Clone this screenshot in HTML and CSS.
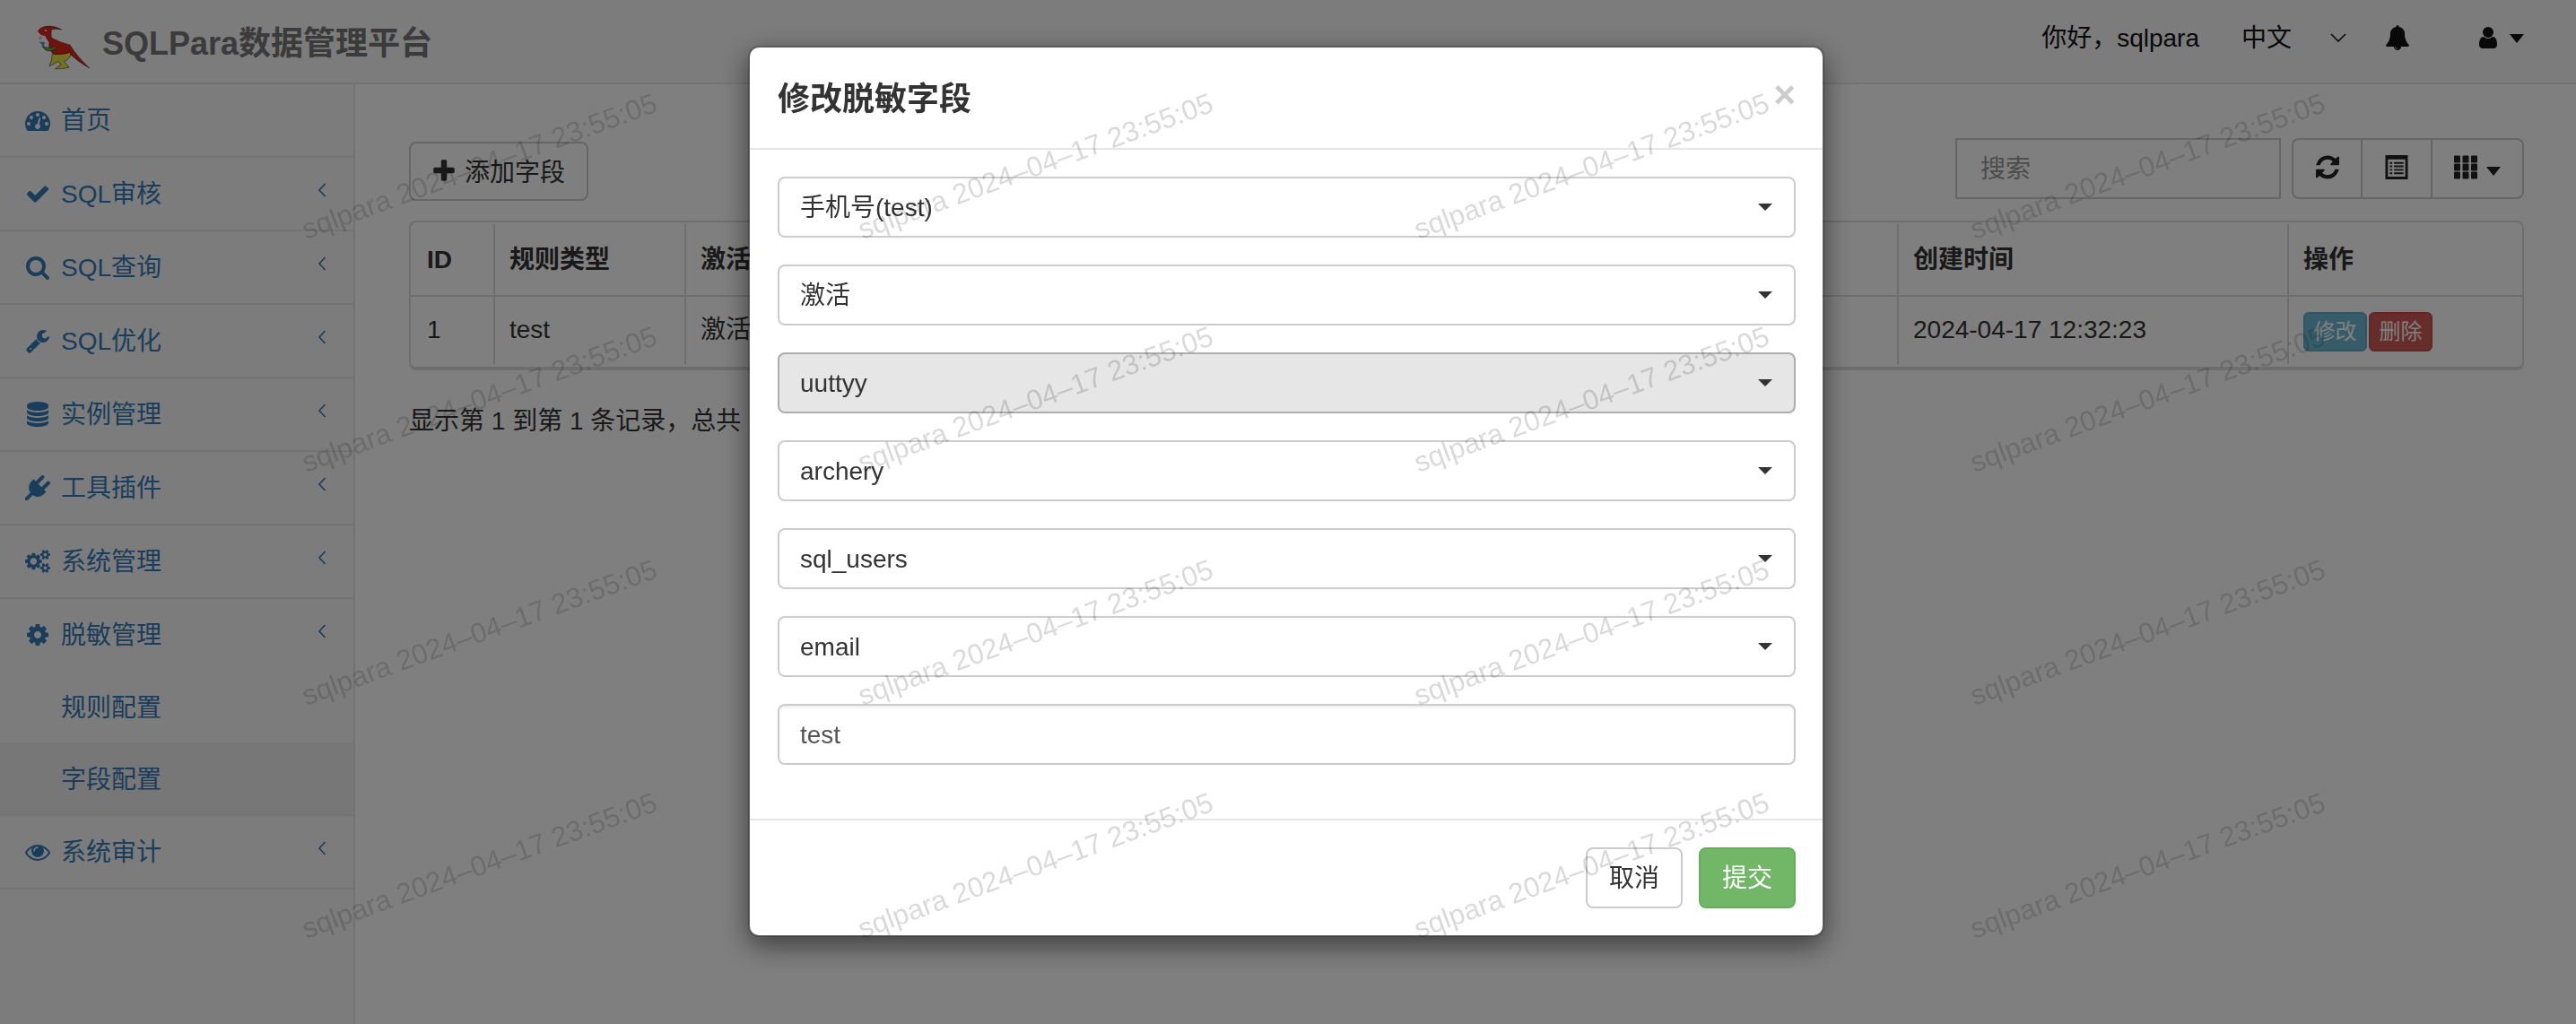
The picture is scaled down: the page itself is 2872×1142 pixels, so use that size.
FILE: index.html
```html
<!DOCTYPE html>
<html lang="zh-CN">
<head>
<meta charset="utf-8">
<title>SQLPara数据管理平台</title>
<link rel="stylesheet" href="styles.css">
</head>
<body>
<header class="navbar">
  <div class="brand">
    <svg class="logo" viewBox="120 80 190 160">
      <path fill="#e0241a" stroke="#111" stroke-width="1.5" d="M127 103Q135 88 165 86Q190 88 206 98Q185 93 172 98Q170 115 172 125Q195 140 235 150Q255 185 300 228Q260 205 235 180Q200 190 180 180Q160 165 165 140Q155 130 152 118Q135 118 127 103Z"/>
      <path fill="#e6e040" stroke="#111" stroke-width="1.5" d="M175 180Q205 185 236 175Q240 195 215 205L232 225Q210 232 185 230L205 215Q195 208 195 205L165 222Q175 200 175 180Z"/>
      <path fill="#60b030" stroke="#111" stroke-width="1.5" d="M140 152Q160 165 185 155L190 160Q165 178 150 165Z"/>
      <path fill="#5090e0" d="M130 138L150 140L147 155Z"/>
      <circle fill="#f0a8a8" cx="135" cy="126" r="5"/>
      <circle fill="#fff" cx="153" cy="101" r="3"/>
    </svg>
    <span class="brand-name">SQLPara数据管理平台</span>
  </div>
  <div class="nav-right">
    <span class="hello">你好，sqlpara</span>
    <span class="lang">中文</span>
    <svg class="lang-chevron" viewBox="0 0 18 10"><path d="M1 1l8 8 8-8" fill="none" stroke="currentColor" stroke-width="1.6"/></svg>
    <svg class="bell" viewBox="0 0 1792 1792"><path fill="currentColor" d="M912 1696q0-16-16-16-59 0-101.500-42.500t-42.500-101.500q0-16-16-16t-16 16q0 73 51.500 124.500t124.500 51.500q16 0 16-16zm816-288q0 52-38 90t-90 38h-448q0 106-75 181t-181 75-181-75-75-181h-448q-52 0-90-38t-38-90q50-42 91-88t85-119.500 74.500-158.500 50-206 19.500-260q0-152 117-282.500t307-158.500q-8-19-8-39 0-40 28-68t68-28 68 28 28 68q0 20-8 39 190 28 307 158.500t117 282.500q0 139 19.500 260t50 206 74.500 158.500 85 119.500 91 88z"/></svg>
    <svg class="user" viewBox="256 128 1280 1536"><path fill="currentColor" d="M1536 1399q0 109-62.500 187t-150.500 78h-854q-88 0-150.500-78t-62.500-187q0-85 8.500-160.500t31.500-152 58.500-131 94-89 134.500-34.500q131 128 313 128t313-128q76 0 134.500 34.500t94 89 58.500 131 31.500 152 8.500 160.500zm-256-887q0 159-112.500 271.500t-271.500 112.500-271.500-112.500-112.500-271.500 112.500-271.500 271.500-112.500 271.500 112.500 112.500 271.500z"/></svg>
    <span class="caret-big"></span>
  </div>
</header>

<div class="layout">
  <nav class="sidebar">
    <ul class="menu">
      <li class="menu-item"><a class="menu-link"><svg class="ico" viewBox="0 0 1792 1792"><path d="M384 1152q0-53-37.500-90.500t-90.500-37.500-90.500 37.500-37.500 90.500 37.500 90.500 90.500 37.500 90.500-37.500 37.500-90.500zm192-448q0-53-37.500-90.500t-90.500-37.500-90.500 37.500-37.500 90.500 37.500 90.500 90.500 37.500 90.500-37.500 37.500-90.500zm428 481l101-382q6-26-7.500-48.500t-38.500-29.500-48 6.500-30 39.500l-101 382q-60 5-107 43.500t-63 98.500q-20 77 20 146t117 89 146-20 89-117q16-60-6-117t-72-91zm660-33q0-53-37.500-90.500t-90.500-37.500-90.500 37.500-37.500 90.500 37.500 90.500 90.500 37.500 90.500-37.500 37.500-90.500zm-640-640q0-53-37.500-90.500t-90.500-37.500-90.500 37.500-37.500 90.500 37.500 90.500 90.500 37.500 90.500-37.500 37.500-90.500zm448 192q0-53-37.500-90.500t-90.500-37.500-90.500 37.500-37.500 90.500 37.500 90.500 90.500 37.500 90.500-37.500 37.500-90.500zm320 448q0 261-141 483-19 29-54 29h-1402q-35 0-54-29-141-221-141-483 0-182 71-348t191-286 286-191 348-71 348 71 286 191 191 286 71 348z"/></svg><span>首页</span></a></li>
      <li class="menu-item"><a class="menu-link"><svg class="ico" viewBox="0 0 1792 1792"><path d="M1671 566q0 40-28 68l-724 724-136 136q-28 28-68 28t-68-28l-136-136-362-362q-28-28-28-68t28-68l136-136q28-28 68-28t68 28l294 295 656-657q28-28 68-28t68 28l136 136q28 28 28 68z"/></svg><span>SQL审核</span><svg class="chev" viewBox="0 0 10 16"><path d="M8.500 1L2 8l6.500 7"/></svg></a></li>
      <li class="menu-item"><a class="menu-link"><svg class="ico" viewBox="0 0 1792 1792"><path d="M1216 832q0-185-131.500-316.500t-316.500-131.500-316.500 131.500-131.500 316.500 131.500 316.500 316.500 131.500 316.500-131.500 131.500-316.500zm512 832q0 52-38 90t-90 38q-54 0-90-38l-343-342q-179 124-399 124-143 0-273.500-55.500t-225-150-150-225-55.500-273.500 55.500-273.500 150-225 225-150 273.500-55.500 273.500 55.500 225 150 150 225 55.500 273.500q0 220-124 399l343 343q37 37 37 90z"/></svg><span>SQL查询</span><svg class="chev" viewBox="0 0 10 16"><path d="M8.500 1L2 8l6.500 7"/></svg></a></li>
      <li class="menu-item"><a class="menu-link"><svg class="ico" viewBox="0 0 1792 1792"><path d="M448 1472q0-26-19-45t-45-19-45 19-19 45 19 45 45 19 45-19 19-45zm644-420l-682 682q-37 37-90 37-52 0-91-37l-106-108q-38-36-38-90 0-53 38-91l681-681q39 98 114.500 173.500t173.500 114.500zm634-435q0 39-23 106-47 134-164.500 217.500t-258.500 83.500q-185 0-316.500-131.500t-131.500-316.500 131.500-316.500 316.500-131.500q58 0 121.500 16.500t107.500 46.500q16 11 16 28t-16 28l-293 169v224l193 107q5-3 79-48.500t135.500-81 70.500-35.500q15 0 23.500 10t8.500 25z"/></svg><span>SQL优化</span><svg class="chev" viewBox="0 0 10 16"><path d="M8.500 1L2 8l6.500 7"/></svg></a></li>
      <li class="menu-item"><a class="menu-link"><svg class="ico" viewBox="0 0 1792 1792"><path d="M896 768q237 0 443-43t325-127v170q0 69-103 128t-280 93.500-385 34.500-385-34.500-280-93.500-103-128v-170q119 84 325 127t443 43zm0 768q237 0 443-43t325-127v170q0 69-103 128t-280 93.500-385 34.500-385-34.500-280-93.500-103-128v-170q119 84 325 127t443 43zm0-384q237 0 443-43t325-127v170q0 69-103 128t-280 93.500-385 34.500-385-34.500-280-93.500-103-128v-170q119 84 325 127t443 43zm0-1152q208 0 385 34.500t280 93.500 103 128v128q0 69-103 128t-280 93.500-385 34.500-385-34.500-280-93.500-103-128v-128q0-69 103-128t280-93.500 385-34.500z"/></svg><span>实例管理</span><svg class="chev" viewBox="0 0 10 16"><path d="M8.500 1L2 8l6.500 7"/></svg></a></li>
      <li class="menu-item"><a class="menu-link"><svg class="ico" viewBox="0 0 1792 1792"><path d="M1755 453q37 38 37 90.500t-37 90.500l-401 400 150 150-160 160q-163 163-389.500 186.500t-411.500-100.500l-362 362h-181v-181l362-362q-124-185-100.500-411.500t186.500-389.500l160-160 150 150 400-401q38-37 91-37t90 37 37 90.500-37 90.500l-400 401 234 234 401-400q38-37 91-37t90 37z"/></svg><span>工具插件</span><svg class="chev" viewBox="0 0 10 16"><path d="M8.500 1L2 8l6.500 7"/></svg></a></li>
      <li class="menu-item"><a class="menu-link"><svg class="ico" viewBox="0 0 1920 1792"><path d="M896 896q0-106-75-181t-181-75-181 75-75 181 75 181 181 75 181-75 75-181zm768 512q0-52-38-90t-90-38-90 38-38 90q0 53 37.500 90.500t90.500 37.500 90.500-37.500 37.500-90.500zm0-1024q0-52-38-90t-90-38-90 38-38 90q0 53 37.500 90.500t90.500 37.500 90.500-37.500 37.500-90.500zm-384 421v185q0 10-7 19.500t-16 10.500l-155 24q-11 35-32 76 34 48 90 115 7 11 7 20 0 12-7 19-23 30-82.500 89.500t-78.500 59.500q-11 0-21-7l-115-90q-37 19-77 31-11 108-23 155-7 24-30 24h-186q-11 0-20-7.500t-10-17.500l-23-153q-34-10-75-31l-118 89q-7 7-20 7-11 0-21-8-144-133-144-160 0-9 7-19 10-14 41-53t47-61q-23-44-35-82l-152-24q-10-1-17-9.500t-7-19.500v-185q0-10 7-19.500t16-10.500l155-24q11-35 32-76-34-48-90-115-7-11-7-20 0-12 7-20 22-30 82-89t79-59q11 0 21 7l115 90q34-18 77-32 11-108 23-154 7-24 30-24h186q11 0 20 7.500t10 17.500l23 153q34 10 75 31l118-89q8-7 20-7 11 0 21 8 144 133 144 160 0 8-7 19-12 16-42 54t-45 60q23 48 34 82l152 23q10 2 17 10.500t7 19.500zm640 533v140q0 16-149 31-12 27-30 52 51 113 51 138 0 4-4 7-122 71-124 71-8 0-46-47t-52-68q-20 2-30 2t-30-2q-14 21-52 68t-46 47q-2 0-124-71-4-3-4-7 0-25 51-138-18-25-30-52-149-15-149-31v-140q0-16 149-31 13-29 30-52-51-113-51-138 0-4 4-7 4-2 35-20t59-34 30-16q8 0 46 46.500t52 67.500q20-2 30-2t30 2q51-71 92-112l6-2q4 0 124 70 4 3 4 7 0 25-51 138 17 23 30 52 149 15 149 31zm0-1024v140q0 16-149 31-12 27-30 52 51 113 51 138 0 4-4 7-122 71-124 71-8 0-46-47t-52-68q-20 2-30 2t-30-2q-14 21-52 68t-46 47q-2 0-124-71-4-3-4-7 0-25 51-138-18-25-30-52-149-15-149-31v-140q0-16 149-31 13-29 30-52-51-113-51-138 0-4 4-7 4-2 35-20t59-34 30-16q8 0 46 46.500t52 67.500q20-2 30-2t30 2q51-71 92-112l6-2q4 0 124 70 4 3 4 7 0 25-51 138 17 23 30 52 149 15 149 31z"/></svg><span>系统管理</span><svg class="chev" viewBox="0 0 10 16"><path d="M8.500 1L2 8l6.500 7"/></svg></a></li>
      <li class="menu-item">
        <a class="menu-link menu-link-open"><svg class="ico" viewBox="0 0 1792 1792"><path d="M1152 896q0-106-75-181t-181-75-181 75-75 181 75 181 181 75 181-75 75-181zm512-109v222q0 12-8 23t-20 13l-185 28q-19 54-39 91 35 50 107 138 10 12 10 25t-9 23q-27 37-99 108t-94 71q-12 0-26-9l-138-108q-44 23-91 38-16 136-29 186-7 28-36 28h-222q-14 0-24.500-8.500t-11.500-21.500l-28-184q-49-16-90-37l-141 107q-10 9-25 9-14 0-25-11-126-114-165-168-7-10-7-23 0-12 8-23 15-21 51-66.500t54-70.500q-27-50-41-99l-183-27q-13-2-21-12.500t-8-23.500v-222q0-12 8-23t19-13l186-28q14-46 39-92-40-57-107-138-10-12-10-24 0-10 9-23 26-36 98.500-107.500t94.500-71.500q13 0 26 10l138 107q44-23 91-38 16-136 29-186 7-28 36-28h222q14 0 24.500 8.500t11.500 21.500l28 184q49 16 90 37l142-107q9-9 24-9 13 0 25 10 129 119 165 170 7 8 7 22 0 12-8 23-15 21-51 66.500t-54 70.500q26 50 41 98l183 28q13 2 21 12.500t8 23.500z"/></svg><span>脱敏管理</span><svg class="chev" viewBox="0 0 10 16"><path d="M8.500 1L2 8l6.500 7"/></svg></a>
        <ul class="submenu">
          <li><a class="sub-link">规则配置</a></li>
          <li><a class="sub-link sub-link-active">字段配置</a></li>
        </ul>
      </li>
      <li class="menu-item"><a class="menu-link"><svg class="ico" viewBox="0 0 1792 1792"><path d="M1664 960q-152-236-381-353 61 104 61 225 0 185-131.500 316.500t-316.500 131.500-316.500-131.500-131.500-316.500q0-121 61-225-229 117-381 353 133 205 333.500 326.500t434.500 121.500 434.500-121.500 333.500-326.500zm-720-384q0-20-14-34t-34-14q-125 0-214.500 89.500t-89.500 214.500q0 20 14 34t34 14 34-14 14-34q0-86 61-147t147-61q20 0 34-14t14-34zm848 384q0 34-20 69-140 230-376.500 368.500t-499.500 138.500-499.500-139-376.500-368q-20-35-20-69t20-69q140-229 376.500-368t499.500-139 499.500 139 376.500 368q20 35 20 69z"/></svg><span>系统审计</span><svg class="chev" viewBox="0 0 10 16"><path d="M8.500 1L2 8l6.500 7"/></svg></a></li>
    </ul>
  </nav>

  <main class="content">
    <div class="toolbar">
      <button class="btn add-btn" type="button"><svg class="plus" viewBox="0 0 1792 1792"><path fill="currentColor" d="M1600 736v192q0 40-28 68t-68 28h-416v416q0 40-28 68t-68 28h-192q-40 0-68-28t-28-68v-416h-416q-40 0-68-28t-28-68v-192q0-40 28-68t68-28h416v-416q0-40 28-68t68-28h192q40 0 68 28t28 68v416h416q40 0 68 28t28 68z"/></svg><span>添加字段</span></button>
      <div class="tools">
        <input class="search" type="text" placeholder="搜索">
        <div class="btn-group">
          <button class="tool" type="button"><svg class="tool-ico" viewBox="128 128 1536 1536"><path fill="currentColor" d="M1639 1056q0 5-1 7-64 268-268 434.500t-478 166.500q-146 0-282.500-55t-243.500-157l-129 129q-19 19-45 19t-45-19-19-45v-448q0-26 19-45t45-19h448q26 0 45 19t19 45-19 45l-137 137q71 66 161 102t187 36q134 0 250-65t186-179q11-17 53-117 8-23 30-23h192q13 0 22.500 9.500t9.500 22.500zm25-800v448q0 26-19 45t-45 19h-448q-26 0-45-19t-19-45 19-45l138-138q-148-137-349-137-134 0-250 65t-186 179q-11 17-53 117-8 23-30 23h-199q-13 0-22.500-9.500t-9.500-22.500v-7q65-268 270-434.500t480-166.500q146 0 284 55.500t245 156.500l130-129q19-19 45-19t45 19 19 45z"/></svg></button>
          <button class="tool" type="button"><svg class="tool-ico" viewBox="0 0 26 28"><path fill="currentColor" fill-rule="evenodd" d="M0 0h26v28H0zM3 5v20h20V5z"/><path fill="currentColor" d="M5 8h3v2H5zM10 8h11v2H10zM5 12h3v2H5zM10 12h11v2H10zM5 16h3v2H5zM10 16h11v2H10zM5 20h3v2H5zM10 20h11v2H10z"/></svg></button>
          <button class="tool tool-wide" type="button"><svg class="tool-ico" viewBox="0 0 26 26"><path fill="currentColor" d="M0 1a1 1 0 0 1 1-1h5a1 1 0 0 1 1 1v6a1 1 0 0 1-1 1H1a1 1 0 0 1-1-1zM9.500 1a1 1 0 0 1 1-1h5a1 1 0 0 1 1 1v6a1 1 0 0 1-1 1h-5a1 1 0 0 1-1-1zM19 1a1 1 0 0 1 1-1h5a1 1 0 0 1 1 1v6a1 1 0 0 1-1 1h-5a1 1 0 0 1-1-1zM0 10a1 1 0 0 1 1-1h5a1 1 0 0 1 1 1v6a1 1 0 0 1-1 1H1a1 1 0 0 1-1-1zM9.500 10a1 1 0 0 1 1-1h5a1 1 0 0 1 1 1v6a1 1 0 0 1-1 1h-5a1 1 0 0 1-1-1zM19 10a1 1 0 0 1 1-1h5a1 1 0 0 1 1 1v6a1 1 0 0 1-1 1h-5a1 1 0 0 1-1-1zM0 19a1 1 0 0 1 1-1h5a1 1 0 0 1 1 1v6a1 1 0 0 1-1 1H1a1 1 0 0 1-1-1zM9.500 19a1 1 0 0 1 1-1h5a1 1 0 0 1 1 1v6a1 1 0 0 1-1 1h-5a1 1 0 0 1-1-1zM19 19a1 1 0 0 1 1-1h5a1 1 0 0 1 1 1v6a1 1 0 0 1-1 1h-5a1 1 0 0 1-1-1z"/></svg><span class="caret-big"></span></button>
        </div>
      </div>
    </div>

    <div class="table-box">
      <table class="data-table">
        <colgroup>
          <col class="col-id"><col class="col-type"><col class="col-state"><col class="col-time"><col class="col-act">
        </colgroup>
        <thead>
          <tr><th>ID</th><th>规则类型</th><th>激活</th><th>创建时间</th><th>操作</th></tr>
        </thead>
        <tbody>
          <tr>
            <td>1</td><td>test</td><td>激活</td><td>2024-04-17 12:32:23</td>
            <td><div class="row-actions"><button class="mini mini-info" type="button">修改</button><button class="mini mini-danger" type="button">删除</button></div></td>
          </tr>
        </tbody>
      </table>
    </div>
    <p class="pager">显示第 1 到第 1 条记录，总共 1 条记录</p>
  </main>
</div>

<div class="backdrop"></div>

<div class="modal">
  <div class="dialog">
    <div class="dialog-head">
      <h4 class="dialog-title">修改脱敏字段</h4>
      <button class="close" type="button">×</button>
    </div>
    <div class="dialog-body">
      <button class="select" type="button"><span>手机号(test)</span><i class="caret-sel"></i></button>
      <button class="select" type="button"><span>激活</span><i class="caret-sel"></i></button>
      <button class="select select-off" type="button"><span>uuttyy</span><i class="caret-sel"></i></button>
      <button class="select" type="button"><span>archery</span><i class="caret-sel"></i></button>
      <button class="select" type="button"><span>sql_users</span><i class="caret-sel"></i></button>
      <button class="select" type="button"><span>email</span><i class="caret-sel"></i></button>
      <input class="field" type="text" value="test">
    </div>
    <div class="dialog-foot">
      <button class="foot-btn foot-cancel" type="button">取消</button>
      <button class="foot-btn foot-ok" type="button">提交</button>
    </div>
  </div>
</div>

<div class="watermarks">
  <span class="wm">sqlpara 2024–04–17 23:55:05</span><span class="wm">sqlpara 2024–04–17 23:55:05</span><span class="wm">sqlpara 2024–04–17 23:55:05</span><span class="wm">sqlpara 2024–04–17 23:55:05</span>
  <span class="wm">sqlpara 2024–04–17 23:55:05</span><span class="wm">sqlpara 2024–04–17 23:55:05</span><span class="wm">sqlpara 2024–04–17 23:55:05</span><span class="wm">sqlpara 2024–04–17 23:55:05</span>
  <span class="wm">sqlpara 2024–04–17 23:55:05</span><span class="wm">sqlpara 2024–04–17 23:55:05</span><span class="wm">sqlpara 2024–04–17 23:55:05</span><span class="wm">sqlpara 2024–04–17 23:55:05</span>
  <span class="wm">sqlpara 2024–04–17 23:55:05</span><span class="wm">sqlpara 2024–04–17 23:55:05</span><span class="wm">sqlpara 2024–04–17 23:55:05</span><span class="wm">sqlpara 2024–04–17 23:55:05</span>
</div>
</body>
</html>
```

FILE: styles.css
```css
* { box-sizing: border-box; }
html, body { height: 100%; }
body {
  margin: 0;
  overflow: hidden;
  background: #fff;
  color: #333;
  font: 28px/40px "Liberation Sans", "Noto Sans CJK SC", sans-serif;
}
button, input { font: inherit; color: inherit; }

/* navbar */
.navbar {
  display: flex;
  justify-content: space-between;
  height: 94px;
  background: #f8f8f8;
  border-bottom: 2px solid #e7e7e7;
}
.brand { display: flex; align-items: center; padding-left: 40px; height: 92px; }
.logo { width: 63px; height: 53px; margin-right: 11px; margin-top: 14px; }
.brand-name { font-size: 36px; font-weight: 700; color: #777; margin-top: 6px; }
.nav-right { display: flex; align-items: center; height: 86px; color: #111; padding-right: 58px; }
.hello { margin-right: 47px; }
.lang { margin-right: 43px; }
.lang-chevron { width: 18px; height: 10px; margin-right: 43px; margin-top: -2px; }
.bell { width: 28px; height: 28px; margin-right: 76px; margin-top: -2px; }
.user { width: 22px; height: 24px; margin-right: 13px; margin-top: -2px; }
.caret-big {
  display: inline-block;
  width: 0; height: 0;
  border-top: 10px solid currentColor;
  border-left: 8px solid transparent;
  border-right: 8px solid transparent;
}

/* shell */
.layout { display: flex; height: calc(100% - 94px); }
.sidebar {
  width: 396px;
  flex: none;
  background: #f8f8f8;
  border-right: 2px solid #e7e7e7;
}
.menu, .submenu { list-style: none; margin: 0; padding: 0; }
.menu-item { border-bottom: 2px solid #e7e7e7; }
.menu-link {
  display: flex;
  align-items: center;
  height: 80px;
  padding-left: 28px;
  color: #337ab7;
}
.menu-link span { margin-top: 2px; }
.ico { width: 28px; height: 28px; flex: none; margin-right: 12px; fill: currentColor; overflow: visible; }
.chev {
  width: 10px; height: 16px;
  margin-left: auto;
  margin-right: 30px;
  margin-top: -8px;
  fill: none;
  stroke: currentColor;
  stroke-width: 1.6;
}
.sub-link { display: block; height: 80px; line-height: 83px; padding-left: 68px; color: #337ab7; }
.sub-link-active { background: #eee; }

/* content */
.content { flex: 1; min-width: 0; padding: 60px 58px 0 60px; }
.toolbar { display: flex; justify-content: space-between; align-items: flex-start; height: 92px; }
.btn {
  display: inline-flex;
  align-items: center;
  height: 66px;
  margin-top: 4px;
  padding: 0 0 0 22px;
  background: #fff;
  border: 2px solid #ccc;
  border-radius: 8px;
  color: #333;
  white-space: nowrap;
}
.btn span { margin-top: 3px; }
.add-btn { width: 200px; }
.plus { width: 30px; height: 30px; margin-right: 8px; flex: none; }
.tools { display: flex; gap: 12px; }
.search {
  width: 363px;
  height: 68px;
  padding: 2px 26px 0;
  border: 2px solid #ccc;
  border-radius: 0;
  outline: none;
  background: #fff;
}
.search::placeholder { color: #999; opacity: 1; }
.btn-group {
  display: flex;
  height: 68px;
  background: #fff;
  border: 2px solid #ccc;
  border-radius: 8px;
  color: #222;
}
.tool {
  display: flex;
  align-items: center;
  justify-content: center;
  width: 78px;
  padding: 0;
  background: transparent;
  border: 0;
  border-left: 2px solid #ccc;
}
.tool:first-child { border-left: 0; width: 75px; }
.tool-wide { width: 102px; }
.tool-ico { width: 26px; height: 27px; margin-top: -4px; }
.tool-wide .caret-big { margin-left: 10px; margin-top: 6px; }

/* table */
.table-box {
  height: 167px;
  padding-top: 2px;
  background: #fff;
  border: 2px solid #ddd;
  border-bottom-width: 4px;
  border-radius: 8px;
}
.data-table { width: 100%; table-layout: fixed; border-collapse: collapse; }
.col-id { width: 93px; }
.col-type { width: 213px; }
.col-state { width: 1352px; }
.col-time { width: 435px; }
.col-act { width: 261px; }
th, td { padding: 0 0 0 16px; border-left: 2px solid #ddd; text-align: left; }
th:first-child, td:first-child { border-left: 0; padding-left: 18px; }
th { height: 80px; font-weight: 700; border-bottom: 2px solid #ddd; }
td { height: 76px; padding-bottom: 2px; }
.row-actions { display: flex; gap: 2px; margin-top: 4px; }
.mini {
  width: 71px;
  height: 44px;
  padding: 0;
  font-size: 24px;
  line-height: 36px;
  color: #fff;
  border: 2px solid;
  border-radius: 6px;
}
.mini-info { background: #6cb8d4; border-color: #5aaecb; }
.mini-danger { background: #cf5a55; border-color: #c94c47; }
.pager { margin: 37px 0 0; }

/* modal */
.backdrop { position: fixed; inset: 0; background: rgba(0, 0, 0, .5); }
.modal {
  position: fixed;
  inset: 0;
  display: flex;
  justify-content: center;
  align-items: flex-start;
  padding: 51px 4px 0 0;
}
.dialog {
  width: 1200px;
  background: #fff;
  border: 2px solid rgba(0, 0, 0, .2);
  background-clip: padding-box;
  border-radius: 12px;
  box-shadow: 0 10px 30px rgba(0, 0, 0, .5);
}
.dialog-head {
  display: flex;
  justify-content: space-between;
  align-items: flex-start;
  height: 114px;
  padding: 30px 30px 0 31px;
  border-bottom: 2px solid #e5e5e5;
}
.dialog-title { margin: 2px 0 0; font-size: 36px; line-height: 52px; font-weight: 700; color: #333; }
.close {
  margin-top: 2px;
  padding: 0;
  border: 0;
  background: none;
  font-size: 42px;
  line-height: 42px;
  font-weight: 700;
  color: #ccc;
}
.dialog-body {
  display: flex;
  flex-direction: column;
  gap: 30px;
  height: 748px;
  padding: 30px 30px 0 31px;
  border-bottom: 2px solid #e5e5e5;
}
.select {
  display: flex;
  flex: none;
  align-items: center;
  justify-content: space-between;
  height: 68px;
  padding: 0 24px 0 23px;
  background: #fff;
  border: 2px solid #ccc;
  border-radius: 8px;
  color: #333;
  text-align: left;
}
.select span { margin-top: 2px; }
.select-off { background: #e6e6e6; border-color: #adadad; }
.caret-sel {
  width: 0; height: 0;
  border-top: 8px solid #333;
  border-left: 8px solid transparent;
  border-right: 8px solid transparent;
}
.field {
  flex: none;
  height: 68px;
  padding: 2px 23px 0;
  background: #fff;
  border: 2px solid #ccc;
  border-radius: 8px;
  box-shadow: inset 0 2px 2px rgba(0, 0, 0, .075);
  color: #555;
  outline: none;
}
.dialog-foot { display: flex; justify-content: flex-end; gap: 18px; padding: 30px 30px 30px 0; }
.foot-btn { width: 108px; height: 68px; padding: 2px 0 0; border: 2px solid; border-radius: 8px; }
.foot-cancel { background: #fff; border-color: #ccc; color: #333; }
.foot-ok { background: #72b768; border-color: #66ad5d; color: #fff; }

/* watermark */
.watermarks {
  position: fixed;
  inset: 0;
  display: grid;
  grid-template-columns: repeat(4, 620px);
  grid-auto-rows: 260px;
  padding: 55px 0 0 224px;
  pointer-events: none;
  overflow: hidden;
}
.wm {
  place-self: center;
  white-space: nowrap;
  font-size: 31.500px;
  color: rgba(0, 0, 0, .15);
  transform: rotate(-20deg);
}
```
